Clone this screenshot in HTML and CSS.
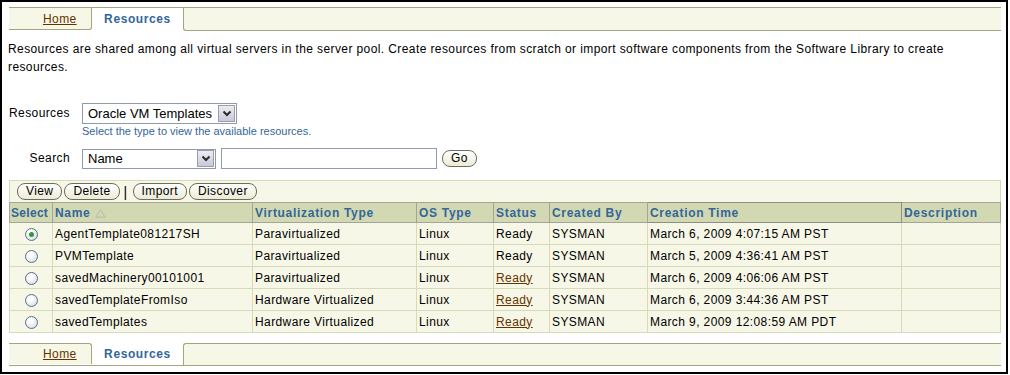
FILE: index.html
```html
<!DOCTYPE html>
<html lang="en">
<head>
  <meta charset="UTF-8">
  <title>Resources</title>
  <link rel="stylesheet" href="styles.css">
</head>
<body>
  <div class="frame">
    <div class="tabbar tabbar-top">
      <a class="tab tab-home" href="#">Home</a>
      <span class="tab tab-current">Resources</span>
      <span class="tab tab-rest"></span>
    </div>

    <p class="intro">Resources are shared among all virtual servers in the server pool. Create resources from scratch or import software components from the Software Library to create resources.</p>

    <div class="field">
      <label class="field-label">Resources</label>
      <div class="field-control">
        <div class="dropdown dd-type">
          <span class="dd-text">Oracle VM Templates</span>
          <span class="dd-btn"><svg width="10" height="7" viewBox="0 0 10 7"><polyline points="1.5,1.5 5,5 8.5,1.5" fill="none" stroke="#2b2b2b" stroke-width="2"/></svg></span>
        </div>
        <div class="hint">Select the type to view the available resources.</div>
      </div>
    </div>

    <div class="field field-search">
      <label class="field-label">Search</label>
      <div class="dropdown dd-search">
        <span class="dd-text">Name</span>
        <span class="dd-btn"><svg width="10" height="7" viewBox="0 0 10 7"><polyline points="1.5,1.5 5,5 8.5,1.5" fill="none" stroke="#2b2b2b" stroke-width="2"/></svg></span>
      </div>
      <input class="search-input" type="text">
      <button class="pill">Go</button>
    </div>

    <div class="results">
      <div class="toolbar">
        <button class="pill">View</button>
        <button class="pill">Delete</button>
        <span class="sep">|</span>
        <button class="pill">Import</button>
        <button class="pill">Discover</button>
      </div>
      <table class="grid">
        <colgroup>
          <col style="width:43px">
          <col style="width:200px">
          <col style="width:164px">
          <col style="width:77px">
          <col style="width:56px">
          <col style="width:98px">
          <col style="width:254px">
          <col style="width:99px">
        </colgroup>
        <thead>
          <tr>
            <th class="th-select">Select</th>
            <th class="th-light">Name <svg class="sort" width="11" height="9" viewBox="0 0 11 9"><polygon points="5.5,0.8 10.2,8.2 0.8,8.2" fill="none" stroke="#b9bca6" stroke-width="1"/></svg></th>
            <th>Virtualization Type</th>
            <th>OS Type</th>
            <th>Status</th>
            <th class="th-light">Created By</th>
            <th class="th-sorted">Creation Time</th>
            <th class="th-light">Description</th>
          </tr>
        </thead>
        <tbody>
          <tr>
            <td class="sel"><span class="radio checked"></span></td>
            <td>AgentTemplate081217SH</td>
            <td>Paravirtualized</td>
            <td>Linux</td>
            <td>Ready</td>
            <td>SYSMAN</td>
            <td>March 6, 2009 4:07:15 AM PST</td>
            <td></td>
          </tr>
          <tr>
            <td class="sel"><span class="radio"></span></td>
            <td>PVMTemplate</td>
            <td>Paravirtualized</td>
            <td>Linux</td>
            <td>Ready</td>
            <td>SYSMAN</td>
            <td>March 5, 2009 4:36:41 AM PST</td>
            <td></td>
          </tr>
          <tr>
            <td class="sel"><span class="radio"></span></td>
            <td>savedMachinery00101001</td>
            <td>Paravirtualized</td>
            <td>Linux</td>
            <td><a class="link" href="#">Ready</a></td>
            <td>SYSMAN</td>
            <td>March 6, 2009 4:06:06 AM PST</td>
            <td></td>
          </tr>
          <tr>
            <td class="sel"><span class="radio"></span></td>
            <td>savedTemplateFromIso</td>
            <td>Hardware Virtualized</td>
            <td>Linux</td>
            <td><a class="link" href="#">Ready</a></td>
            <td>SYSMAN</td>
            <td>March 6, 2009 3:44:36 AM PST</td>
            <td></td>
          </tr>
          <tr>
            <td class="sel"><span class="radio"></span></td>
            <td>savedTemplates</td>
            <td>Hardware Virtualized</td>
            <td>Linux</td>
            <td><a class="link" href="#">Ready</a></td>
            <td>SYSMAN</td>
            <td>March 9, 2009 12:08:59 AM PDT</td>
            <td></td>
          </tr>
        </tbody>
      </table>
    </div>

    <div class="tabbar tabbar-bottom">
      <a class="tab tab-home" href="#">Home</a>
      <span class="tab tab-current">Resources</span>
      <span class="tab tab-rest"></span>
    </div>
  </div>
</body>
</html>
```

FILE: styles.css
```css
body {
  margin: 0;
  font-family: "Liberation Sans", Arial, sans-serif;
  font-size: 12px;
  letter-spacing: 0.4px;
  color: #000;
  background: #fff;
}
.frame {
  width: 1004px;
  height: 370px;
  border: 2px solid #000;
  overflow: hidden;
}

/* tabs */
.tabbar {
  display: flex;
  margin: 5px 5px 0 7px;
  border-top: 1px solid #a3a57c;
}
.tab {
  height: 22px;
  line-height: 22px;
  border-bottom: 1px solid #a3a57c;
  background: #f7f7e7;
}
.tab-home {
  width: 83px;
  padding-left: 34px;
  box-sizing: border-box;
  color: #663300;
  text-decoration: underline;
  border-right: 1px solid #a3a57c;
  border-bottom-right-radius: 3px;
}
.tab-current {
  width: 91px;
  text-align: center;
  font-weight: bold;
  letter-spacing: 0.6px;
  color: #336699;
  background: #fff;
  border-bottom-color: #fff;
}
.tab-rest {
  flex: 1;
  border-left: 1px solid #a3a57c;
  border-bottom-left-radius: 3px;
}
.tabbar-bottom {
  margin-top: 10px;
  border-top: none;
  border-bottom: 1px solid #a3a57c;
}
.tabbar-bottom .tab {
  height: 21px;
  line-height: 21px;
  border-bottom: none;
  border-top: 1px solid #a3a57c;
  border-radius: 0;
}
.tabbar-bottom .tab-home {
  border-top-right-radius: 3px;
}
.tabbar-bottom .tab-current {
  border-top-color: #fff;
}
.tabbar-bottom .tab-rest {
  border-top-left-radius: 3px;
}

.intro {
  margin: 9px 40px 0 6px;
  line-height: 18px;
}

/* form fields */
.field {
  display: flex;
  align-items: flex-start;
  margin: 27px 0 0 6px;
}
.field-label {
  width: 62px;
  margin-right: 12px;
  text-align: right;
  line-height: 21px;
}
.dropdown {
  display: flex;
  align-items: center;
  box-sizing: border-box;
  height: 21px;
  border: 1px solid #8f9aaa;
  background: #fff;
}
.dd-text {
  flex: 1;
  padding-left: 5px;
  font-size: 13px;
  letter-spacing: 0;
}
.dd-btn {
  display: flex;
  align-items: center;
  justify-content: center;
  width: 15px;
  height: 15px;
  margin-right: 1px;
  border: 1px solid #9c9cb0;
  background: linear-gradient(#ececf2, #c9c9d6);
}
.dd-type {
  width: 155px;
}
.hint {
  font-size: 11px;
  line-height: 14px;
  letter-spacing: 0;
  color: #336699;
}
.field-search {
  align-items: center;
  margin-top: 10px;
}
.dd-search {
  width: 134px;
  height: 20px;
}
.search-input {
  width: 216px;
  height: 21px;
  box-sizing: border-box;
  margin: 0 0 0 5px;
  border: 1px solid #8f9aaa;
  padding: 0 3px;
}
.field-search .pill {
  margin-left: 5px;
}

/* buttons */
.pill {
  height: 17px;
  padding: 0 8px;
  border: 1px solid #6e6e58;
  border-radius: 8px;
  background: linear-gradient(#ffffff, #ecebd6);
  font-family: "Liberation Sans", Arial, sans-serif;
  font-size: 12px;
  letter-spacing: 0.4px;
  line-height: 15px;
  color: #000;
  cursor: pointer;
}

/* results */
.results {
  margin: 11px 5px 0 7px;
}
.toolbar {
  display: flex;
  align-items: center;
  gap: 2px;
  height: 21px;
  padding-left: 7px;
  border: 1px solid #d6d8bc;
  border-bottom: none;
  background: #f7f7e7;
}
.toolbar .sep {
  margin: 0 3px 0 2px;
  font-size: 14px;
}
.grid {
  width: 991px;
  table-layout: fixed;
  border-collapse: collapse;
  background: #f7f7e7;
}
.grid th {
  height: 19px;
  padding: 0 2px;
  text-align: left;
  font-weight: bold;
  letter-spacing: 0.7px;
  color: #336699;
  background: #d1d8b2;
  border: 1px solid #a3a598;
  white-space: nowrap;
  overflow: hidden;
}
.grid th.th-select {
  padding: 0 1px;
  letter-spacing: 0.3px;
}
.grid th.th-light {
  border-left-color: #eef0dc;
}
.grid th.th-sorted {
  border-color: #8e8e86;
}
.sort {
  vertical-align: -1px;
}
.grid td {
  height: 21px;
  padding: 0 2px;
  border: 1px solid #d6d9ba;
  white-space: nowrap;
}
.grid td.sel {
  text-align: center;
}
.radio {
  display: inline-block;
  width: 11px;
  height: 11px;
  vertical-align: middle;
  border: 1px solid #56708f;
  border-radius: 50%;
  background: radial-gradient(circle at 40% 35%, #ffffff 20%, #d4d8de 90%);
  position: relative;
}
.radio.checked::after {
  content: "";
  position: absolute;
  left: 3px;
  top: 3px;
  width: 5px;
  height: 5px;
  border-radius: 50%;
  background: #2f9a38;
}
.link {
  color: #663300;
  text-decoration: underline;
}
```
